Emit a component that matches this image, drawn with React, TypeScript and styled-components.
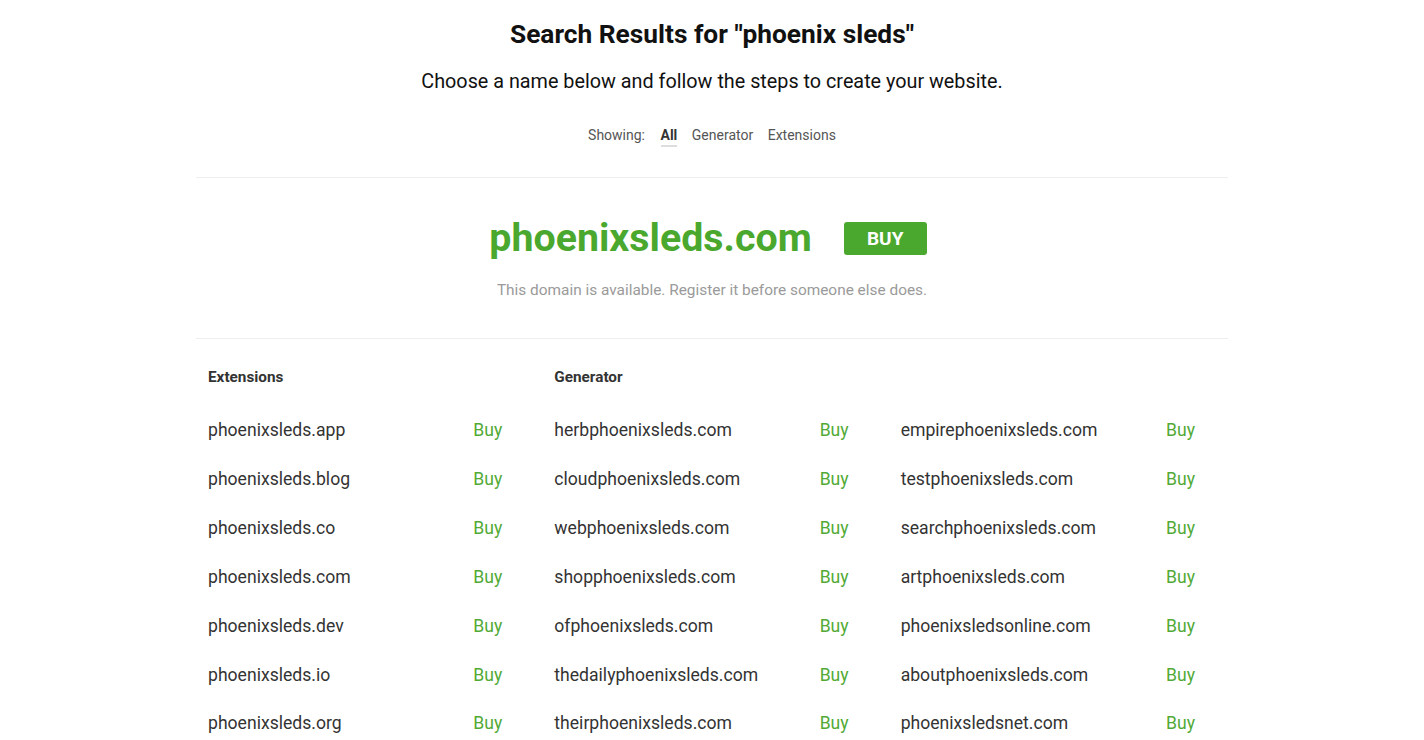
import React from "react";
import styled, { createGlobalStyle } from "styled-components";

const GlobalStyle = createGlobalStyle`
  html, body { margin: 0; padding: 0; background: #fff; }
  body { font-family: Roboto, "Liberation Sans", Arial, sans-serif; color: #222; }
`;

const Page = styled.div`
  width: 1032px;
  margin: 0 auto;
  padding-top: 18px;
`;

const Title = styled.h1`
  margin: 0;
  text-align: center;
  font-size: 26.3px;
  font-weight: 700;
  line-height: 32px;
  color: #111;
`;

const Subtitle = styled.p`
  margin: 18px 0 0;
  text-align: center;
  font-size: 19.8px;
  line-height: 28px;
  color: #111;
`;

const Filters = styled.div`
  display: flex;
  justify-content: center;
  gap: 14.5px;
  margin-top: 29px;
  font-size: 14px;
  line-height: 20px;
  color: #555;
`;

const FilterLabel = styled.span`
  margin-right: 1px;
`;

const FilterItem = styled.a<{ $active?: boolean }>`
  color: ${(p) => (p.$active ? "#333" : "#555")};
  font-weight: ${(p) => (p.$active ? 700 : 400)};
  text-decoration: none;
  border-bottom: ${(p) => (p.$active ? "2px solid #ddd" : "2px solid transparent")};
  cursor: pointer;
`;

const Divider = styled.hr`
  border: 0;
  height: 1px;
  background: #eee;
  margin: 0;
`;

const TopDivider = styled(Divider)`
  margin-top: 30px;
`;

const Featured = styled.section`
  padding: 36px 0 38px;
  text-align: center;
`;

const FeaturedRow = styled.div`
  display: flex;
  align-items: center;
  justify-content: center;
  gap: 32px;
  padding-right: 8px;
`;

const FeaturedName = styled.span`
  font-size: 39.35px;
  font-weight: 700;
  line-height: 48px;
  color: #4ba82e;
`;

const BuyButton = styled.button`
  width: 83px;
  height: 33px;
  border: 0;
  border-radius: 3px;
  background: #4ba82e;
  color: #fff;
  font-family: inherit;
  font-size: 19px;
  font-weight: 700;
  cursor: pointer;
  margin-top: 1px;
`;

const Available = styled.p`
  margin: 18px 0 0;
  font-size: 15.4px;
  line-height: 20px;
  color: #9a9a9a;
`;

const Results = styled.div`
  display: grid;
  grid-template-columns: repeat(3, 1fr);
  column-gap: 7px;
  padding-top: 28px;
`;

const Column = styled.div`
  padding: 0 12px;
`;

const ColumnHeader = styled.h3`
  margin: 0;
  height: 20px;
  font-size: 15.3px;
  font-weight: 700;
  line-height: 20px;
  color: #333;
`;

const List = styled.div`
  margin-top: 19px;
  display: flex;
  flex-direction: column;
`;

const Row = styled.div`
  display: flex;
  justify-content: space-between;
  align-items: center;
  height: 48.83px;
  padding-right: 21px;
  font-size: 17.6px;
  color: #333;
`;

const RowBuy = styled.a`
  color: #52aa36;
  text-decoration: none;
  cursor: pointer;
`;

const extensions = [
  "phoenixsleds.app",
  "phoenixsleds.blog",
  "phoenixsleds.co",
  "phoenixsleds.com",
  "phoenixsleds.dev",
  "phoenixsleds.io",
  "phoenixsleds.org",
];

const generator1 = [
  "herbphoenixsleds.com",
  "cloudphoenixsleds.com",
  "webphoenixsleds.com",
  "shopphoenixsleds.com",
  "ofphoenixsleds.com",
  "thedailyphoenixsleds.com",
  "theirphoenixsleds.com",
];

const generator2 = [
  "empirephoenixsleds.com",
  "testphoenixsleds.com",
  "searchphoenixsleds.com",
  "artphoenixsleds.com",
  "phoenixsledsonline.com",
  "aboutphoenixsleds.com",
  "phoenixsledsnet.com",
];

const DomainList = ({ items }: { items: string[] }) => (
  <List>
    {items.map((d) => (
      <Row key={d}>
        <span>{d}</span>
        <RowBuy>Buy</RowBuy>
      </Row>
    ))}
  </List>
);

export default function App() {
  return (
    <>
      <GlobalStyle />
      <Page>
        <Title>Search Results for "phoenix sleds"</Title>
        <Subtitle>Choose a name below and follow the steps to create your website.</Subtitle>
        <Filters>
          <FilterLabel>Showing:</FilterLabel>
          <FilterItem $active>All</FilterItem>
          <FilterItem>Generator</FilterItem>
          <FilterItem>Extensions</FilterItem>
        </Filters>
        <TopDivider />
        <Featured>
          <FeaturedRow>
            <FeaturedName>phoenixsleds.com</FeaturedName>
            <BuyButton>BUY</BuyButton>
          </FeaturedRow>
          <Available>This domain is available. Register it before someone else does.</Available>
        </Featured>
        <Divider />
        <Results>
          <Column>
            <ColumnHeader>Extensions</ColumnHeader>
            <DomainList items={extensions} />
          </Column>
          <Column>
            <ColumnHeader>Generator</ColumnHeader>
            <DomainList items={generator1} />
          </Column>
          <Column>
            <ColumnHeader />
            <DomainList items={generator2} />
          </Column>
        </Results>
      </Page>
    </>
  );
}
